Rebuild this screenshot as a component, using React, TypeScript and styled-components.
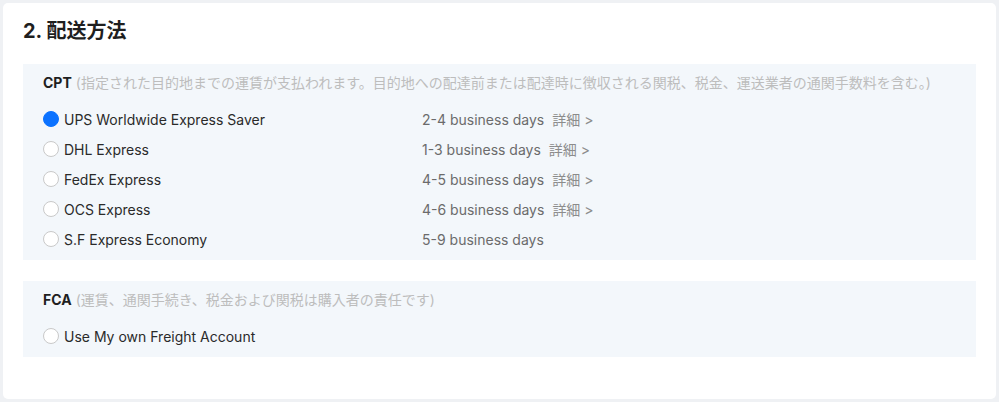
import React, { useState } from 'react';
import styled, { createGlobalStyle } from 'styled-components';

const GlobalStyle = createGlobalStyle`
  html, body {
    margin: 0;
    padding: 0;
    background: #eff1f4;
    font-family: Inter, "Noto Sans CJK JP", sans-serif;
  }
`;

const Page = styled.div`
  padding: 3px;
  height: 402px;
  box-sizing: border-box;
`;

const Card = styled.div`
  background: #fff;
  border-radius: 5px;
  height: 396px;
  box-sizing: border-box;
  padding: 16px 20px;
`;

const Title = styled.h2`
  margin: 0 0 21px;
  font-size: 20px;
  line-height: 24px;
  font-weight: 700;
  color: #1f1f1f;
`;

const Section = styled.div`
  background: #f3f7fb;
  padding: 9px 20px 6px;
  margin-bottom: 21px;
`;

const SectionHead = styled.div`
  font-size: 14px;
  line-height: 20px;
  margin-bottom: 11px;
  color: #bdbdbd;
  white-space: nowrap;
`;

const Term = styled.b`
  color: #1f1f1f;
  font-weight: 700;
  margin-right: 4px;
`;

const Row = styled.label`
  display: flex;
  align-items: center;
  height: 30px;
  font-size: 14px;
  cursor: pointer;
`;

const Radio = styled.span<{ $checked: boolean }>`
  width: 16px;
  height: 16px;
  box-sizing: border-box;
  border-radius: 50%;
  flex-shrink: 0;
  border: 1px solid ${(p) => (p.$checked ? '#0b72ff' : '#c9c9c9')};
  background: ${(p) => (p.$checked ? '#0b72ff' : '#fff')};
`;

const Name = styled.span`
  width: 358px;
  margin-left: 5px;
  color: #2a2a2a;
`;

const Days = styled.span`
  color: #6b6b6b;
`;

const Detail = styled.span`
  margin-left: 8px;
  color: #8c8c8c;
`;

type Option = { id: string; name: string; days?: string; detail?: boolean };

const cpt: Option[] = [
  { id: 'ups', name: 'UPS Worldwide Express Saver', days: '2-4 business days', detail: true },
  { id: 'dhl', name: 'DHL Express', days: '1-3 business days', detail: true },
  { id: 'fedex', name: 'FedEx Express', days: '4-5 business days', detail: true },
  { id: 'ocs', name: 'OCS Express', days: '4-6 business days', detail: true },
  { id: 'sf', name: 'S.F Express Economy', days: '5-9 business days' },
];

const fca: Option[] = [{ id: 'own', name: 'Use My own Freight Account' }];

export default function App() {
  const [selected, setSelected] = useState('ups');

  const renderRow = (o: Option) => (
    <Row key={o.id} onClick={() => setSelected(o.id)}>
      <Radio $checked={selected === o.id} />
      <Name>{o.name}</Name>
      {o.days && <Days>{o.days}</Days>}
      {o.detail && <Detail>詳細 &gt;</Detail>}
    </Row>
  );

  return (
    <Page>
      <GlobalStyle />
      <Card>
        <Title>2. 配送方法</Title>
        <Section>
          <SectionHead>
            <Term>CPT</Term>
            (指定された目的地までの運賃が支払われます。目的地への配達前または配達時に徴収される関税、税金、運送業者の通関手数料を含む。)
          </SectionHead>
          {cpt.map(renderRow)}
        </Section>
        <Section>
          <SectionHead>
            <Term>FCA</Term>
            (運賃、通関手続き、税金および関税は購入者の責任です)
          </SectionHead>
          {fca.map(renderRow)}
        </Section>
      </Card>
    </Page>
  );
}
